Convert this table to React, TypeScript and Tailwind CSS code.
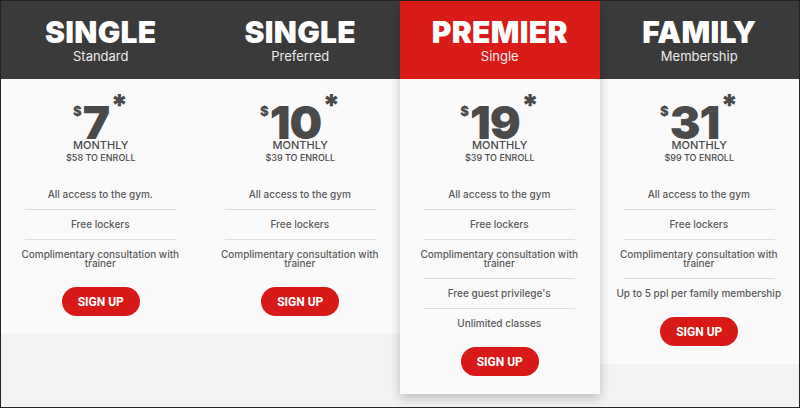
import React from 'react';

interface Plan {
  title: string;
  subtitle: string;
  price: string;
  enroll: string;
  features: string[];
  featured?: boolean;
}

const plans: Plan[] = [
  {
    title: 'SINGLE',
    subtitle: 'Standard',
    price: '7',
    enroll: '$58 TO ENROLL',
    features: ['All access to the gym.', 'Free lockers', 'Complimentary consultation with trainer'],
  },
  {
    title: 'SINGLE',
    subtitle: 'Preferred',
    price: '10',
    enroll: '$39 TO ENROLL',
    features: ['All access to the gym', 'Free lockers', 'Complimentary consultation with trainer'],
  },
  {
    title: 'PREMIER',
    subtitle: 'Single',
    price: '19',
    enroll: '$39 TO ENROLL',
    features: [
      'All access to the gym',
      'Free lockers',
      'Complimentary consultation with trainer',
      "Free guest privilege's",
      'Unlimited classes',
    ],
    featured: true,
  },
  {
    title: 'FAMILY',
    subtitle: 'Membership',
    price: '31',
    enroll: '$99 TO ENROLL',
    features: [
      'All access to the gym',
      'Free lockers',
      'Complimentary consultation with trainer',
      'Up to 5 ppl per family membership',
    ],
  },
];

const PlanCard: React.FC<{ plan: Plan }> = ({ plan }) => {
  return (
    <div
      className={`flex flex-col ${
        plan.featured ? 'relative z-10 shadow-[0_4px_10px_rgba(0,0,0,0.22)]' : ''
      }`}
    >
      {/* Header */}
      <div
        className={`h-[78px] flex flex-col items-center pt-[15px] ${
          plan.featured ? 'bg-[#d91c17]' : 'bg-[#3a3a3a]'
        }`}
      >
        <div className="font-['Inter'] font-black text-[30px] leading-[32px] text-white tracking-[0.3px]">
          {plan.title}
        </div>
        <div className="font-['Inter'] text-[13px] leading-[16px] text-[#ececec]">
          {plan.subtitle}
        </div>
      </div>

      {/* Body */}
      <div className="bg-[#fafafa] flex flex-col items-center pt-[25px] pb-[18px] font-['Inter']">
        <div className="flex items-start text-[#4a4a4a] h-[36px]">
          <span className="font-black text-[13px] leading-none mt-[1px] mr-[1px]">$</span>
          <span className="font-black text-[46px] leading-[36px] tracking-[-1px]">{plan.price}</span>
          <span className="font-black text-[30px] leading-[20px] -mt-[9px] ml-[1px]">*</span>
        </div>
        <div className="text-[11px] leading-[12px] text-[#4a4a4a] font-medium -mt-[1px]">MONTHLY</div>
        <div className="text-[9px] leading-[12px] text-[#4a4a4a] font-medium mt-[1px]">{plan.enroll}</div>

        <div className="w-[151px] mt-[15px] flex flex-col">
          {plan.features.map((f, i) => (
            <div
              key={i}
              className={`text-center text-[10px] leading-[9px] text-[#5a5a5a] font-medium ${
                i > 0 ? 'border-t border-[#dcdcdc] pt-[10px] pb-[10px]' : 'pt-[11px] pb-[10px]'
              }`}
            >
              <div className="w-[170px] -mx-[10px]">{f}</div>
            </div>
          ))}
        </div>

        <button className="mt-[9px] w-[78px] h-[29px] rounded-full bg-[#d71a17] text-white font-['Roboto'] font-bold text-[12px] leading-none">
          SIGN UP
        </button>
      </div>
    </div>
  );
};

const App: React.FC = () => {
  return (
    <div className="w-[800px] h-[408px] box-border border border-[#222] bg-[#f2f2f2] overflow-hidden">
      <div className="grid grid-cols-4 items-start">
        {plans.map((p, i) => (
          <PlanCard key={i} plan={p} />
        ))}
      </div>
    </div>
  );
};

export default App;
